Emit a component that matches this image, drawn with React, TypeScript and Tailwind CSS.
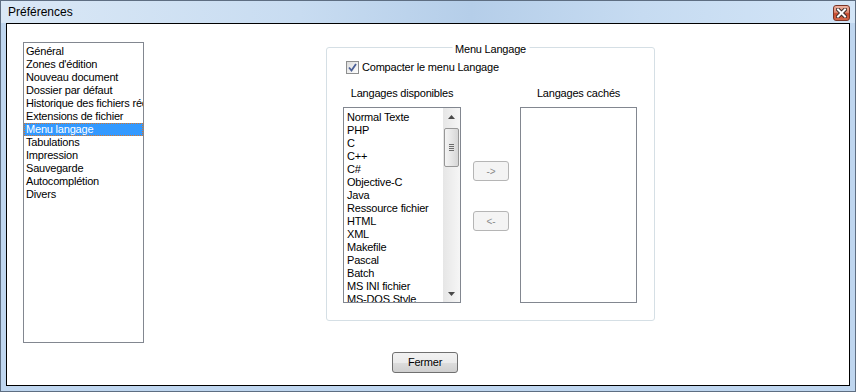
import React from "react";

const prefItems = [
  "Général",
  "Zones d'édition",
  "Nouveau document",
  "Dossier par défaut",
  "Historique des fichiers récents",
  "Extensions de fichier",
  "Menu langage",
  "Tabulations",
  "Impression",
  "Sauvegarde",
  "Autocomplétion",
  "Divers",
];

const languages = [
  "Normal Texte",
  "PHP",
  "C",
  "C++",
  "C#",
  "Objective-C",
  "Java",
  "Ressource fichier",
  "HTML",
  "XML",
  "Makefile",
  "Pascal",
  "Batch",
  "MS INI fichier",
  "MS-DOS Style",
];

const CloseButton = () => (
  <div className="mt-[4px] mr-[5px] w-[17px] h-[16px] rounded-[3px] border border-[#7a3426] bg-[linear-gradient(180deg,#eeb3a3_0%,#dd8a72_45%,#c64a2e_55%,#d4684a_100%)] flex items-center justify-center">
    <svg width="11" height="10" viewBox="0 0 11 10">
      <path d="M2 1.5 L9 8.5 M9 1.5 L2 8.5" stroke="#3b2a28" strokeWidth="4" strokeLinecap="square" />
      <path d="M2 1.5 L9 8.5 M9 1.5 L2 8.5" stroke="#ffffff" strokeWidth="2" strokeLinecap="square" />
    </svg>
  </div>
);

const Arrow = ({ up }: { up?: boolean }) => (
  <svg width="7" height="4" viewBox="0 0 7 4">
    <polygon points={up ? "3.5,0 7,4 0,4" : "0,0 7,0 3.5,4"} fill="#4a4a4a" />
  </svg>
);

const Scrollbar = () => (
  <div className="w-[17px] h-full flex flex-col bg-[linear-gradient(90deg,#e6e6e6,#f6f6f6)]">
    <div className="h-[17px] flex items-center justify-center">
      <Arrow up />
    </div>
    <div className="mt-[3px] mx-[1px] h-[39px] rounded-[2px] border border-[#979797] bg-[linear-gradient(90deg,#f4f4f4,#e6e6e6_50%,#d6d6d6)] flex flex-col items-center justify-center gap-[1px]">
      <div className="w-[5px] h-[1px] bg-[#6b6b6b]" />
      <div className="w-[5px] h-[1px] bg-[#6b6b6b]" />
      <div className="w-[5px] h-[1px] bg-[#6b6b6b]" />
      <div className="w-[5px] h-[1px] bg-[#6b6b6b]" />
    </div>
    <div className="flex-1" />
    <div className="h-[17px] flex items-center justify-center">
      <Arrow />
    </div>
  </div>
);

const DisabledButton = ({ label }: { label: string }) => (
  <div className="w-[36px] h-[20px] rounded-[3px] border border-[#b5b5b5] bg-[#f4f4f4] flex items-center justify-center text-[10px] text-[#8c8c8c]">
    {label}
  </div>
);

export default function App() {
  return (
    <div className="w-[856px] h-[392px] border border-[#5e6e82] bg-[#bfd6ef] flex flex-col font-['Liberation_Sans',Arial,sans-serif] text-black">
      <div className="h-[22px] flex justify-between bg-[linear-gradient(90deg,#dae8f6_0%,#c8dcf1_35%,#b5cee9_55%,#c6dbf1_75%,#d3e5f7_100%)]">
        <span className="pl-[7px] text-[12px] leading-[22px]">Préférences</span>
        <CloseButton />
      </div>

      <div className="flex-1 mx-[5px] mb-[5px] border border-black bg-white text-[11px] tracking-[-0.2px]">
        <div className="flex pl-[16px] pt-[18px]">
          <div className="w-[121px] h-[301px] border border-[#828790] pt-[2px] overflow-hidden">
            {prefItems.map((item) => (
              <div
                key={item}
                className={
                  item === "Menu langage"
                    ? "h-[13px] leading-[11px] pl-[1px] whitespace-nowrap overflow-hidden bg-[#3399ff] text-white border border-dotted border-[#d9772b]"
                    : "h-[13px] leading-[13px] pl-[2px] whitespace-nowrap overflow-hidden"
                }
              >
                {item}
              </div>
            ))}
          </div>

          <div className="relative ml-[182px] mt-[5px] w-[329px] h-[274px] border border-[#d5dfe5] rounded-[3px]">
            <span className="absolute top-[-6px] left-1/2 -translate-x-1/2 bg-white px-[3px] leading-[14px] whitespace-nowrap">
              Menu Langage
            </span>

            <div className="flex items-center mt-[13px] ml-[19px] h-[13px]">
              <div className="w-[13px] h-[13px] border border-[#8e8f8f] bg-[linear-gradient(135deg,#dcdcdc,#ffffff)] flex items-center justify-center">
                <svg width="9" height="9" viewBox="0 0 9 9">
                  <path d="M1 4.5 L3.5 7.5 L8 1" stroke="#4a5f97" strokeWidth="1.8" fill="none" />
                </svg>
              </div>
              <span className="ml-[3px] leading-[13px]">Compacter le menu Langage</span>
            </div>

            <div className="flex mt-[12px]">
              <div className="ml-[16px] w-[118px] flex flex-col">
                <div className="h-[14px] leading-[14px] text-center whitespace-nowrap">Langages disponibles</div>
                <div className="mt-[7px] h-[196px] border border-[#828790] flex overflow-hidden">
                  <div className="flex-1 pt-[3px] pl-[3px] overflow-hidden">
                    {languages.map((lang) => (
                      <div key={lang} className="h-[13px] leading-[13px] whitespace-nowrap">
                        {lang}
                      </div>
                    ))}
                  </div>
                  <Scrollbar />
                </div>
              </div>

              <div className="ml-[12px] pt-[75px] flex flex-col gap-[30px]">
                <DisabledButton label="->" />
                <DisabledButton label="<-" />
              </div>

              <div className="ml-[11px] w-[117px] flex flex-col">
                <div className="h-[14px] leading-[14px] text-center whitespace-nowrap">Langages cachés</div>
                <div className="mt-[7px] h-[196px] border border-[#828790]" />
              </div>
            </div>
          </div>
        </div>

        <div className="ml-[385px] mt-[9px] w-[66px] h-[21px] rounded-[3px] border border-[#707070] bg-[linear-gradient(180deg,#f2f2f2_0%,#ebebeb_50%,#dddddd_51%,#cfcfcf_100%)] flex items-center justify-center">
          Fermer
        </div>
      </div>
    </div>
  );
}
